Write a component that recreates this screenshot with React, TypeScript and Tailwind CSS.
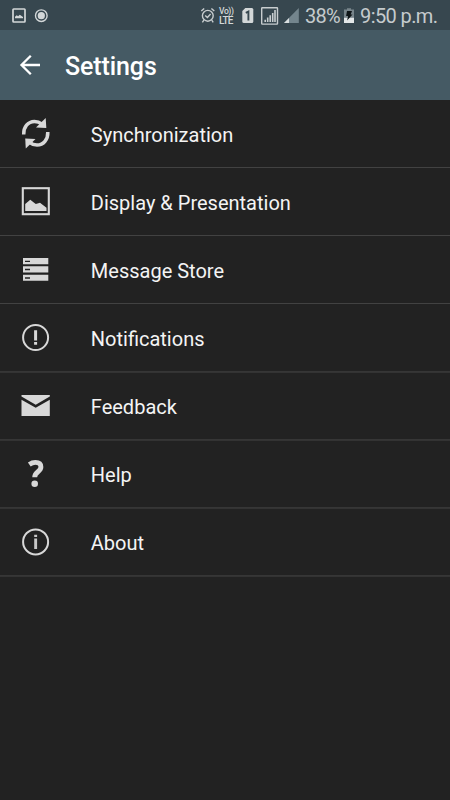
import type { ReactNode } from "react";

const ink = "#d8d8d8";

function StatusLeft() {
  return (
    <svg width="50" height="30" viewBox="0 0 50 30" fill="none" stroke="#d3d7d8">
      <rect x="13" y="9" width="12" height="13" rx=".7" strokeWidth="1.7" />
      <path d="M15 18.3v-1.6l1.7-1.5 1.4 1 1.7-1.4 3.2 2.3v1.2z" fill="#d3d7d8" stroke="none" />
      <circle cx="41.3" cy="15.7" r="5.8" strokeWidth="1.4" />
      <circle cx="41.3" cy="15.7" r="3.6" fill="#d3d7d8" stroke="none" />
    </svg>
  );
}

function AlarmIcon() {
  return (
    <svg width="18" height="30" viewBox="199 0 18 30" fill="none" stroke="#c8cdcf" strokeWidth="1.4">
      <circle cx="207.8" cy="15.8" r="5.4" />
      <path d="M201.3 11l2.9-2.5M214.3 11l-2.9-2.5M203.9 20l-1.5 2.4M211.7 20l1.5 2.4M205.2 15.5l2.2 2 3.2-3.5" />
    </svg>
  );
}

function SignalIcons() {
  return (
    <svg width="63" height="30" viewBox="240 0 63 30" fill="none">
      <path d="M245.3 8h6.5q1.5 0 1.5 1.5v12q0 1.5-1.5 1.5h-8q-1.5 0-1.5-1.5V11z" fill="#d3d7d8" />
      <path d="M245.8 12.8l2.6-1.3v9" stroke="#37474f" strokeWidth="1.9" />
      <rect x="261.7" y="7.7" width="15.8" height="16.4" rx=".5" stroke="#c8cdcf" strokeWidth="1.4" />
      <path d="M265.2 22v-2.2M267.7 22v-4.4M270.2 22v-6.7M272.7 22v-9M275 22V10" stroke="#c8cdcf" strokeWidth="1.6" />
      <path d="M284 23L298.8 8v15z" fill="#74858d" />
      <path d="M284 23l5-5v5z" fill="#dadedf" />
    </svg>
  );
}

function BatteryIcon() {
  return (
    <svg width="12" height="30" viewBox="343 0 12 30">
      <path d="M344 9.5h3V8.2h4v1.3h3V23h-10z" fill="#78858b" />
      <path d="M344 17.8h10V23h-10z" fill="#e4e7e8" />
      <path d="M347 11h5l-1.3 3.4h1.8l-5.4 6 1-4.4h-2z" fill="#101618" />
    </svg>
  );
}

function Icon({ children, top }: { children: ReactNode; top: number }) {
  return (
    <svg className="shrink-0" width="91" height="67" viewBox={`0 ${top} 91 67`} fill={ink} stroke="none">
      {children}
    </svg>
  );
}

const sharpLine = "border-[#424242]";
const softLine = "border-[#363636] shadow-[0_1px_0_#333333]";

const rows: { label: string; top: number; line: string; icon: ReactNode }[] = [
  {
    label: "Synchronization",
    top: 100,
    line: sharpLine,
    icon: (
      <>
        <path d="M23.7 134.5C23.4 127 28 121.500 34.500 121.400c3.300 0 5.500 1.200 7.500 2.800" fill="none" stroke={ink} strokeWidth="3.5" />
        <path d="M45.7 118l.6 10-10.3-.5z" />
        <path d="M47.8 132c.3 7.500-4.300 13-10.800 13.100-3.300 0-5.500-1.200-7.500-2.800" fill="none" stroke={ink} strokeWidth="3.5" />
        <path d="M25.8 148.500l-.6-10 10.300.5z" />
      </>
    ),
  },
  {
    label: "Display & Presentation",
    top: 168,
    line: sharpLine,
    icon: (
      <>
        <rect x="22.8" y="188.2" width="26" height="26" fill="none" stroke={ink} strokeWidth="2.1" />
        <path d="M25.2 211v-7l5.100-4.300 3.500 2.800 2 1.500 4.200-1.200 6.500 5v3.200z" />
      </>
    ),
  },
  {
    label: "Message Store",
    top: 236,
    line: sharpLine,
    icon: (
      <>
        <path d="M23 258h25.3v6.2H23zM23 266.2h25.3v6.2H23zM23 274.8h25.3v6H23z" />
        <path d="M25 261.3h5M25 269.500h5M25 278h5" stroke="#222" strokeWidth="1.3" />
      </>
    ),
  },
  {
    label: "Notifications",
    top: 304,
    line: softLine,
    icon: (
      <>
        <circle cx="35.6" cy="337.5" r="12.5" fill="none" stroke={ink} strokeWidth="2" />
        <path d="M34.1 330.3h3v10.2h-3zM34.1 341.9h3v2.8h-3z" />
      </>
    ),
  },
  {
    label: "Feedback",
    top: 372,
    line: softLine,
    icon: (
      <>
        <path d="M21.5 395h28.300v1.400l-14.100 8.400-14.200-8.400z" />
        <path d="M21.5 399.700l14.200 8.100 14.100-8.100V416H21.500z" />
      </>
    ),
  },
  {
    label: "Help",
    top: 440,
    line: softLine,
    icon: (
      <>
        <path d="M29.3 464.400c1.900-1.300 3.900-2 6.100-2 3.500 0 5.500 1.700 5.500 4.600 0 5-6.200 4.600-6.200 10.300" fill="none" stroke={ink} strokeWidth="4.9" />
        <circle cx="34.7" cy="483.7" r="3.3" />
      </>
    ),
  },
  {
    label: "About",
    top: 508,
    line: softLine,
    icon: (
      <>
        <circle cx="35.6" cy="541.9" r="12.5" fill="none" stroke={ink} strokeWidth="2" />
        <path d="M34.2 538.5h2.9V549h-2.9zM34.2 534.8h2.9v2.3h-2.9z" fill="#c8c8c8" />
      </>
    ),
  },
];

export default function App() {
  return (
    <div className="flex h-[800px] w-[450px] flex-col overflow-hidden bg-[#222222] font-['Roboto',sans-serif]">
      <div className="flex h-[30px] shrink-0 items-center bg-[#37474f] text-[#c5cbcd]">
        <StatusLeft />
        <div className="ml-auto flex h-[30px] items-center pr-[12px]">
          <AlarmIcon />
          <div className="ml-[2px] flex w-[17px] flex-col items-start pt-[2px] font-['Roboto',sans-serif] font-medium text-[#d3d7d8]">
            <span className="text-[8.5px] leading-[8px] tracking-[-0.4px]">Vo))</span>
            <span className="text-[10px] leading-[11px] tracking-[-0.8px]">LTE</span>
          </div>
          <div className="ml-[4px]"><SignalIcons /></div>
          <span className="ml-[2px] w-[38px] pt-[2px] text-[20px] leading-[28px] tracking-[-0.8px]">38%</span>
          <BatteryIcon />
          <span className="ml-[5px] w-[78px] pt-[2px] text-[20px] leading-[28px] tracking-[-0.6px] whitespace-nowrap">9:50 p.m.</span>
        </div>
      </div>
      <header className="flex h-[70px] shrink-0 items-center bg-[#455a64] text-white">
        <svg width="65" height="70" viewBox="0 30 65 70" fill="none" stroke="white" strokeWidth="2.3">
          <path d="M40 65H21.500M30.800 55.800L21.500 65l9.300 9.200" />
        </svg>
        <h1 className="pt-[3px] text-[25px] leading-[30px] font-medium tracking-[-0.1px]">Settings</h1>
      </header>
      <ul>
        {rows.map((row) => (
          <li key={row.label} className={`flex h-[68px] items-center border-b ${row.line}`}>
            <Icon top={row.top}>{row.icon}</Icon>
            <span className="-ml-[0.2px] pt-[2px] text-[20px] leading-[28px] text-[#f4f4f4]">{row.label}</span>
          </li>
        ))}
      </ul>
    </div>
  );
}
